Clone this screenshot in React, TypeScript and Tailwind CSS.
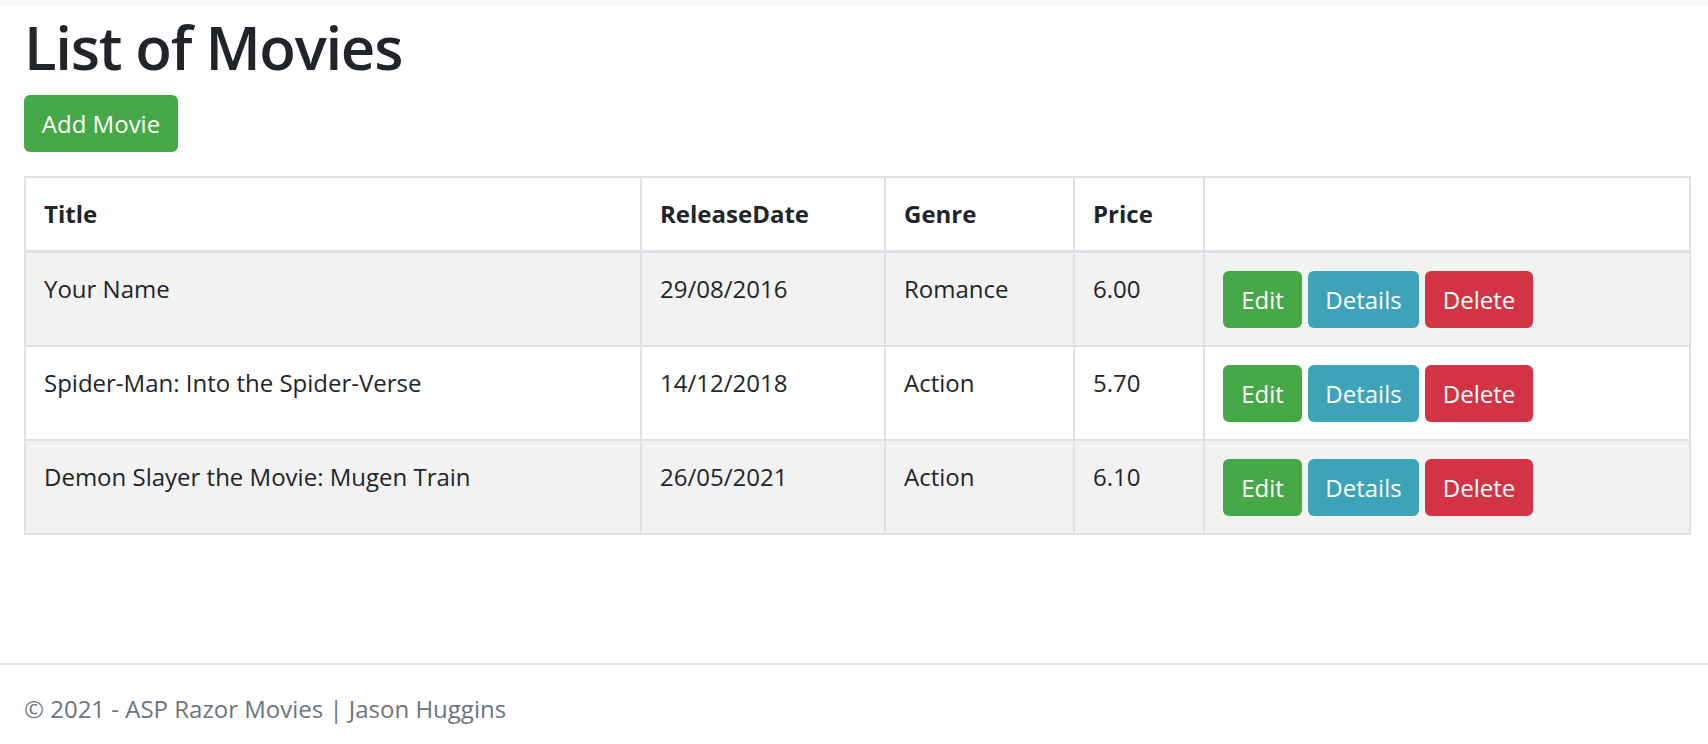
import React from "react";

interface Movie {
  id: number;
  title: string;
  releaseDate: string;
  genre: string;
  price: string;
}

const MOVIES: Movie[] = [
  { id: 1, title: "Your Name", releaseDate: "29/08/2016", genre: "Romance", price: "6.00" },
  {
    id: 2,
    title: "Spider-Man: Into the Spider-Verse",
    releaseDate: "14/12/2018",
    genre: "Action",
    price: "5.70",
  },
  {
    id: 3,
    title: "Demon Slayer the Movie: Mugen Train",
    releaseDate: "26/05/2021",
    genre: "Action",
    price: "6.10",
  },
];

const head = "border-2 border-b-[3px] border-[#dee2e6] p-[18px] align-top text-left";
const cell = "border-2 border-[#dee2e6] px-[18px] pt-[18px] pb-[17px] align-top text-left";

function RowActions() {
  return (
    <div className="flex gap-[6px]">
      <a className="flex items-center justify-center w-[79px] h-[57px] rounded-[6px] bg-[#46a846] text-white">
        Edit
      </a>
      <a className="flex items-center justify-center w-[111px] h-[57px] rounded-[6px] bg-[#3da3b9] text-white">
        Details
      </a>
      <a className="flex items-center justify-center w-[108px] h-[57px] rounded-[6px] bg-[#d33445] text-white">
        Delete
      </a>
    </div>
  );
}

export default function App() {
  return (
    <div className="min-h-screen flex flex-col bg-white text-[#212529] font-['Open_Sans',sans-serif] text-[24px] leading-[36px]">
      <div className="h-[7px] bg-[#f8f8f8]" />

      <main className="pl-6 pt-[4px]">
        <h1 className="text-[60px] leading-[72px] font-semibold tracking-[-1.3px] mb-3">
          List of Movies
        </h1>
        <p className="mb-6">
          <a className="inline-flex items-center justify-center w-[154px] h-[57px] rounded-[6px] bg-[#46a846] text-white">
            Add Movie
          </a>
        </p>

        <table className="w-[1665px] table-fixed border-collapse">
          <colgroup>
            <col className="w-[616px]" />
            <col className="w-[244px]" />
            <col className="w-[189px]" />
            <col className="w-[130px]" />
            <col className="w-[486px]" />
          </colgroup>
          <thead>
            <tr>
              <th className={`${head} font-bold`}>Title</th>
              <th className={`${head} font-bold`}>ReleaseDate</th>
              <th className={`${head} font-bold`}>Genre</th>
              <th className={`${head} font-bold`}>Price</th>
              <th className={head} />
            </tr>
          </thead>
          <tbody>
            {MOVIES.map((m, i) => (
              <tr key={m.id} className={i % 2 === 0 ? "bg-[#f2f2f2]" : "bg-white"}>
                <td className={cell}>{m.title}</td>
                <td className={cell}>{m.releaseDate}</td>
                <td className={cell}>{m.genre}</td>
                <td className={cell}>{m.price}</td>
                <td className={cell}>
                  <RowActions />
                </td>
              </tr>
            ))}
          </tbody>
        </table>
      </main>

      <footer className="mt-auto h-[81px] border-t-2 border-[#e5e5e5] pl-6 pt-[26px] text-[#6c757d]">
        © 2021 - ASP Razor Movies | Jason Huggins
      </footer>
    </div>
  );
}
